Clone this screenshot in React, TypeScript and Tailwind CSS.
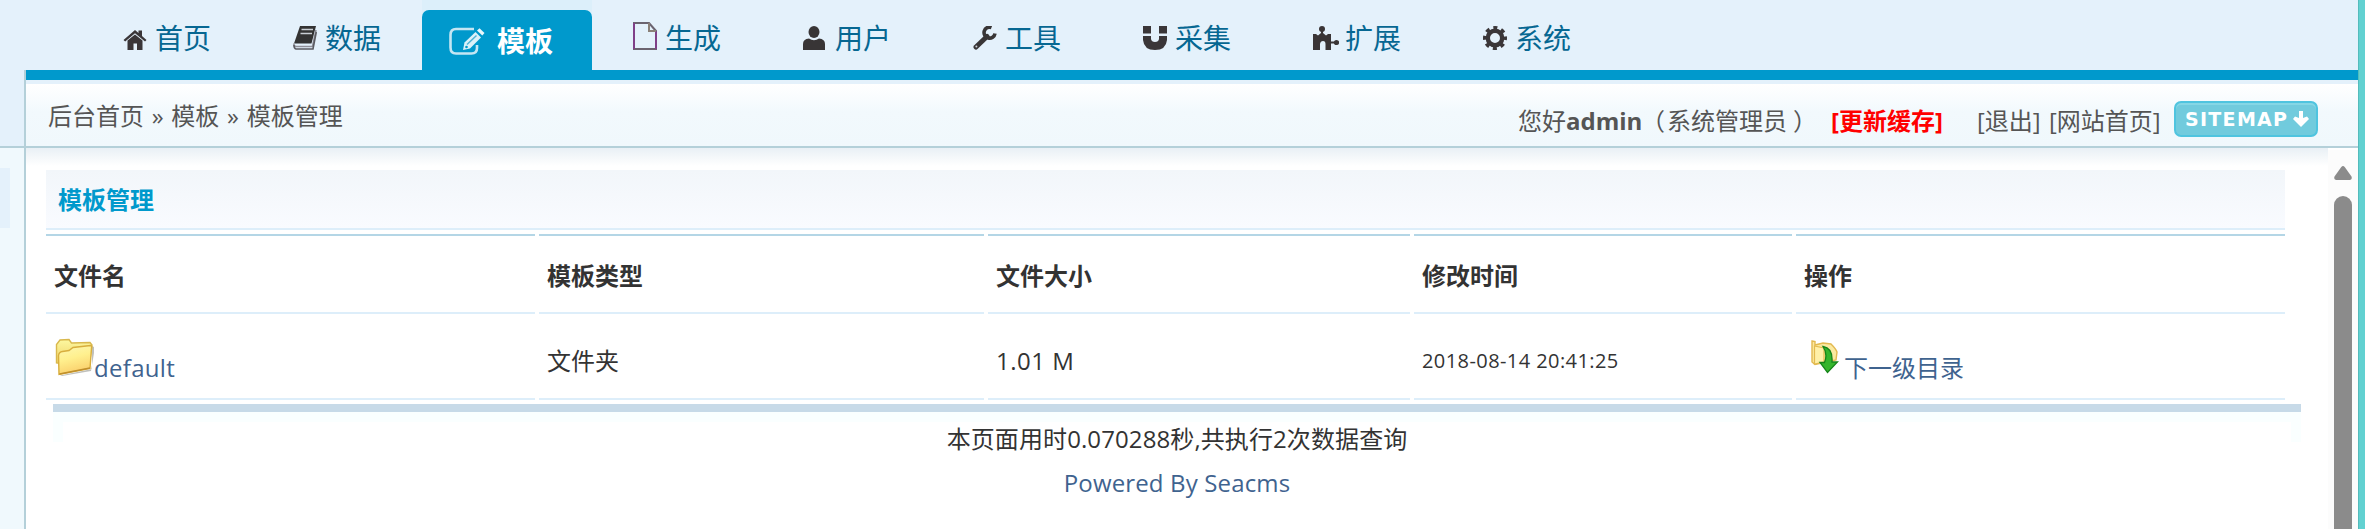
import React from "react";

type IconProps = { className?: string };

const HomeIcon = ({ className }: IconProps) => (
  <svg className={className} width="24" height="24" viewBox="0 0 24 24" fill="#3a3638">
    <path d="M0.500 14 12 4l3.500 3V4.500h3.500v5.500l4.500 4-1.500 1.500L12 7.300 2.200 15.500z" />
    <path d="M4.500 14.500 12 8.500l7.500 6V24H14v-6.500h-3.500V24H4.500z" />
  </svg>
);

const BookIcon = ({ className }: IconProps) => (
  <svg className={className} width="24" height="24" viewBox="0 0 24 24">
    <path d="M7 0H23L18.500 17.500H1z" fill="#333" />
    <path d="M8.500 3.500H20M7.500 7.500H19" stroke="#c9ced4" strokeWidth="1.600" />
    <path d="M23 4 19.500 20.500H3.500Q0.500 20.500 1 17.500" fill="none" stroke="#8f8f98" strokeWidth="1.600" />
    <path d="M23.300 6 20 23H3Q0.800 22.500 1 19" fill="none" stroke="#5a5a60" strokeWidth="1.600" />
  </svg>
);

const PageIcon = ({ className }: IconProps) => (
  <svg className={className} width="24" height="28" viewBox="0 0 24 28" fill="none">
    <path d="M1 1H16L23 9V27H1z" stroke="#6b6470" strokeWidth="2" />
    <path d="M1 1V27M23 9V27" stroke="#85388f" strokeWidth="1.600" />
    <path d="M16 1V9H23" stroke="#8a8078" strokeWidth="2" />
  </svg>
);

const UserIcon = ({ className }: IconProps) => (
  <svg className={className} width="24" height="24" viewBox="0 0 24 24" fill="#383536">
    <ellipse cx="11" cy="6" rx="5.500" ry="6" />
    <path d="M0 24V18Q0 13 6 12.500Q11 16 16 12.500Q22 13 22 18V24z" />
  </svg>
);

const WrenchIcon = ({ className }: IconProps) => (
  <svg className={className} width="24" height="24" viewBox="0 0 24 24">
    <path d="M3 21 14 10.500" stroke="#383536" strokeWidth="5" strokeLinecap="round" />
    <path d="M18.500 1.500A5.500 5.500 0 1 0 22 7.500" stroke="#383536" strokeWidth="3.600" fill="none" />
    <circle cx="3.400" cy="20.600" r="1" fill="#cdd3d8" />
  </svg>
);

const MagnetIcon = ({ className }: IconProps) => (
  <svg className={className} width="24" height="24" viewBox="0 0 24 24" fill="#3a3638">
    <path d="M0 0H8V7.500H0zM16 0H24V7.500H16z" />
    <path d="M0 10H8V13Q8.500 16 12 16T16 13V10H24V14Q23 24 12 24T0 14z" />
  </svg>
);

const PuzzleIcon = ({ className }: IconProps) => (
  <svg className={className} width="26" height="24" viewBox="0 0 26 24" fill="#3a3536">
    <path d="M0 8H3L5 9.500 8 7V5H10V7L13 9.500 15 8H18V15.500H22V17.500H18V24H12.500V18Q12.500 15 10 15T7 18V24H0z" />
    <circle cx="9" cy="3" r="3" />
    <circle cx="23.500" cy="16.500" r="2.600" />
  </svg>
);

const GearIcon = ({ className }: IconProps) => (
  <svg className={className} width="24" height="24" viewBox="0 0 24 24">
    <circle cx="12" cy="12" r="7.200" fill="none" stroke="#3a3638" strokeWidth="4.400" />
    <circle cx="12" cy="12" r="10.300" fill="none" stroke="#3a3638" strokeWidth="3.400" strokeDasharray="4.045 4.045" strokeDashoffset="2" />
  </svg>
);

const EditIcon = () => (
  <svg width="36" height="28" viewBox="0 0 36 28" fill="none">
    <path d="M25 2H7Q1.500 2 1.500 8V20.500Q1.500 26.500 7 26.500H22.500Q28 26.500 28 21V18" stroke="#c4e6f3" strokeWidth="2.600" />
    <path d="M14 23 15.500 15.500 26.500 5 32 10.500 21 21.500z" fill="#dcf1f8" />
    <path d="M28 3.500 30.500 1.300 35.500 6 33.300 8.500z" fill="#eaf7fb" />
    <path d="M18 17.500 27.500 8.500" stroke="#4db3d6" strokeWidth="1.500" />
    <circle cx="17.500" cy="20" r="1.300" fill="#0099cc" />
  </svg>
);

const FolderIcon = () => (
  <svg width="40" height="40" viewBox="0 0 40 40">
    <defs>
      <linearGradient id="folderFront" x1="0" y1="0" x2="0.300" y2="1">
        <stop offset="0" stopColor="#fdf8b4" />
        <stop offset="0.500" stopColor="#fff08e" />
        <stop offset="1" stopColor="#fad06c" />
      </linearGradient>
      <linearGradient id="folderBack" x1="0" y1="0" x2="0" y2="1">
        <stop offset="0" stopColor="#fcf8a0" />
        <stop offset="1" stopColor="#eecb5c" />
      </linearGradient>
    </defs>
    <path d="M6 38.500 38 32V9L40 10V16L37 34 8 39z" fill="#8c8c84" opacity="0.550" />
    <path d="M2.500 26V7.500L6 3 15 2.500 17.500 6 36 5.500 38 8 35 30z" fill="url(#folderBack)" stroke="#d9b84d" strokeWidth="1.400" />
    <path d="M5 37.500 4.500 18.500Q5 15 8.500 14.500L15 13.500 19 10.500 36.500 8.500Q38 8.500 37.500 11L36 31.500z" fill="url(#folderFront)" stroke="#d8ae3e" strokeWidth="1.400" />
    <path d="M5.500 37 36 31" stroke="#c08f2c" strokeWidth="1.300" />
  </svg>
);

const DescendIcon = () => (
  <svg width="28" height="34" viewBox="0 0 28 34">
    <path d="M1 1 4 1.500V5L12 3 20 4Q25 9 26 12L25 20 4 24.500 1 22z" fill="#fbe9a0" stroke="#e3b950" strokeWidth="1.400" />
    <path d="M3.500 6 13 8V22L3.500 24z" fill="#fff0a8" stroke="#e3ba50" strokeWidth="1.200" />
    <path d="M12 6.500Q22 8 21 22H26.500L16.500 32.500 9 22.500H13.500Q17 14 12 6.500z" fill="#35b52c" stroke="#17851a" strokeWidth="1.300" />
  </svg>
);

const NAV = [
  { label: "首页", Icon: HomeIcon },
  { label: "数据", Icon: BookIcon },
  { label: "模板", Icon: null },
  { label: "生成", Icon: PageIcon },
  { label: "用户", Icon: UserIcon },
  { label: "工具", Icon: WrenchIcon },
  { label: "采集", Icon: MagnetIcon },
  { label: "扩展", Icon: PuzzleIcon },
  { label: "系统", Icon: GearIcon },
];

function Nav() {
  return (
    <nav className="flex h-[70px] pl-[82px]">
      {NAV.map(({ label, Icon }) =>
        Icon ? (
          <a key={label} className="flex h-[70px] w-[170px] pl-[41px] text-[28px] leading-[76px] text-[#066792]">
            <span className="flex w-[32px] shrink-0 items-end pb-[20px]">
              <Icon />
            </span>
            {label}
          </a>
        ) : (
          <a key={label} className="flex w-[170px] bg-[#dceffa] pt-[10px]">
            <span className="flex h-[60px] w-full items-center rounded-t-[7px] bg-[#0099cc] pt-[2px] pl-[27px] text-[28px] font-bold text-white">
              <EditIcon />
              <span className="pl-[12px] leading-[58px]">{label}</span>
            </span>
          </a>
        ),
      )}
    </nav>
  );
}

function Sitemap() {
  return (
    <a className="flex h-[36px] w-[144px] items-center rounded-[7px] border-2 border-[#4fc4df] bg-[#71cbdd] pl-[9px] shadow-[inset_0_2px_0_#85d6e5]">
      <span className="w-[107px] font-['DejaVu_Sans'] text-[19px] leading-[32px] font-bold tracking-[1.3px] text-white">
        SITEMAP
      </span>
      <svg width="18" height="18" viewBox="0 0 18 18" fill="white">
        <path d="M7 1H11V8L15 6.500 17 9 9 17 1 9 3 6.500 7 8z" />
      </svg>
    </a>
  );
}

function TopBar() {
  return (
    <div className="flex h-[62px] justify-between bg-linear-to-b from-white via-[#f2f9fd] via-45% to-[#f0f8fc] pl-[22px] text-[24px] text-[#555]">
      <div className="leading-[64px] [word-spacing:1.5px]">后台首页 » 模板 » 模板管理</div>
      <div className="flex pr-[40px] leading-[73px] whitespace-nowrap">
        <span className="w-[125px]">
          您好<b>admin</b>
        </span>
        <span className="flex w-[188px]">
          <span className="w-[24px] -indent-[2px]">（</span>
          系统管理员
          <span className="pl-[6px]">）</span>
        </span>
        <b className="w-[146px] text-[#ff0000]">[更新缓存]</b>
        <span className="w-[72px]">[退出]</span>
        <span className="w-[125px]">[网站首页]</span>
        <span className="pt-[17px]">
          <Sitemap />
        </span>
      </div>
    </div>
  );
}

const COLUMNS = "grid grid-cols-[489px_445px_422px_378px_489px] gap-x-[4px]";
const HEADINGS = ["文件名", "模板类型", "文件大小", "修改时间", "操作"];

function FileTable() {
  return (
    <section className="ml-[20px] w-[2239px] text-[24px] text-[#333]">
      <h1 className="h-[60px] border-b-2 border-[#ddeefa] bg-linear-to-b from-[#f2f6fa] to-[#f9fbff] pl-[12px] leading-[59px] font-bold text-[#0099cc]">
        模板管理
      </h1>
      <div className={`${COLUMNS} mt-[4px]`}>
        {HEADINGS.map((h) => (
          <div key={h} className="h-[80px] border-t-2 border-b-2 border-t-[#b4d6e6] border-b-[#ddeefa] pl-[8px] leading-[79px] font-bold">
            {h}
          </div>
        ))}
      </div>
      <div className={`${COLUMNS} *:h-[86px] *:border-b-2 *:border-[#ddeefa] *:pl-[8px] *:leading-[94px]`}>
        <div className="flex text-[#3f638f]">
          <span className="w-[40px] pt-[23px]">
            <FolderIcon />
          </span>
          <span className="leading-[108px] tracking-[0.3px]">default</span>
        </div>
        <div>文件夹</div>
        <div className="tracking-[0.5px]">1.01 M</div>
        <div className="text-[20px] tracking-[0.42px]">2018-08-14 20:41:25</div>
        <div className="flex text-[#3f638f]">
          <span className="w-[40px] pt-[26px] pl-[7px]">
            <DescendIcon />
          </span>
          <span className="leading-[108px]">下一级目录</span>
        </div>
      </div>
    </section>
  );
}

function Footer() {
  return (
    <footer className="mt-[4px] ml-[27px] w-[2248px] border-t-[8px] border-[#c7dae8] text-center text-[24px]">
      <div className="flex h-[30px] justify-between bg-linear-to-b from-[#faffff] from-[10px] to-white to-[10px]">
        <span className="w-[10px] bg-[#faffff]" />
        <p className="leading-[54px] tracking-[0.1px] text-[#333]">本页面用时0.070288秒,共执行2次数据查询</p>
        <span className="w-[10px] bg-[#faffff]" />
      </div>
      <p className="pt-[19px] leading-[44px] tracking-[0.15px] text-[#3f638f]">Powered By Seacms</p>
    </footer>
  );
}

function Scrollbar() {
  return (
    <div className="mt-[2px] flex w-[30px] flex-col items-center bg-[#fcfcfc]">
      <svg className="mt-[16px] shrink-0" width="18" height="14" viewBox="0 0 18 14">
        <path d="M7.300 1Q9-0.800 10.700 1L17.500 10.500Q18.500 13.500 16 14H2Q-0.500 13.500 0.500 10.500z" fill="#8b8b8b" />
      </svg>
      <div className="mt-[16px] w-[18px] grow rounded-t-full bg-[#8b8b8b]" />
    </div>
  );
}

export default function App() {
  return (
    <div className="flex h-[529px] w-[2365px] overflow-hidden bg-white font-['Open_Sans','Noto_Sans_CJK_SC',sans-serif]">
      <div className="flex w-[2358px] flex-col">
        <header className="h-[148px] border-b-2 border-[#b4d0d9] bg-[#e4f1fb]">
          <Nav />
          <div className="ml-[24px] h-[76px] border-l-2 border-[#b4d0d9]">
            <div className="mb-[4px] h-[10px] bg-[#0099cc]" />
            <TopBar />
          </div>
        </header>
        <div className="flex h-[381px]">
          <aside className="w-[26px] shrink-0 border-r-2 border-[#b4d0d9] bg-[#f0f9fd] pt-[20px]">
            <div className="h-[60px] w-[10px] bg-[#e4f1fb]" />
          </aside>
          <main className="w-[2302px] shrink-0 bg-linear-to-b from-[#e9f0f5] to-white to-[18px] pt-[22px]">
            <FileTable />
            <Footer />
          </main>
          <Scrollbar />
        </div>
      </div>
      <div className="w-[7px] border-l border-[#54bcbc] bg-[#62d1d1]" />
    </div>
  );
}
